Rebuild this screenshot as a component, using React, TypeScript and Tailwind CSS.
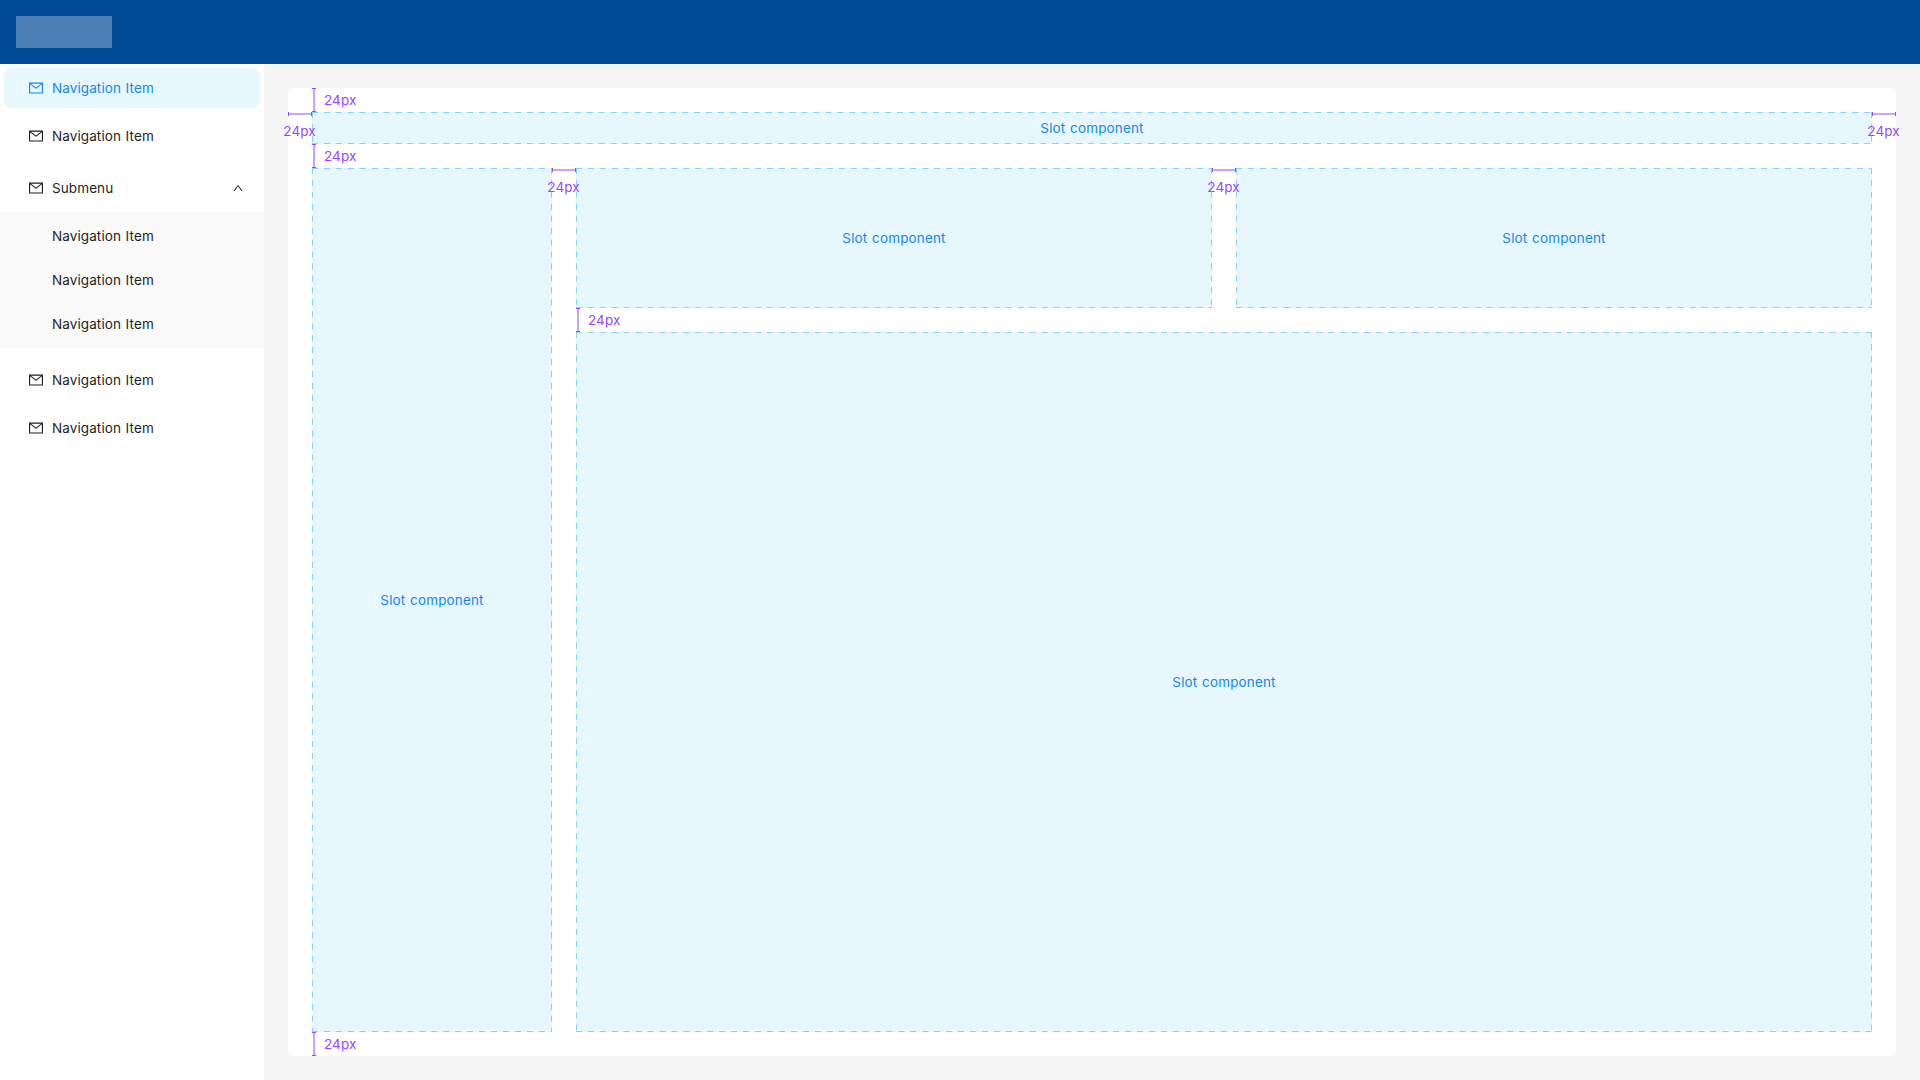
import type { ReactNode } from "react";
import { AiOutlineMail, AiOutlineUp } from "react-icons/ai";

function NavItem({ active = false, label = "Navigation Item" }: { active?: boolean; label?: string }) {
  return (
    <div className="h-12 p-1">
      <div
        className={
          active
            ? "flex h-10 items-center gap-2 rounded-lg bg-[#e6f7ff] pl-6 text-[#1688e8]"
            : "flex h-10 items-center gap-2 rounded-lg pl-6"
        }
      >
        <AiOutlineMail className="size-4" />
        <span>{label}</span>
      </div>
    </div>
  );
}

/* Dashed outline: every edge starts its dash pattern at its top or left end */
function DashedOutline() {
  return (
    <svg className="absolute inset-0 size-full" stroke="#87d0ff" strokeWidth="2" strokeDasharray="5.97 5.97">
      <line x1="0" y1="0" x2="100%" y2="0" />
      <line x1="0" y1="100%" x2="100%" y2="100%" />
      <line x1="0" y1="0" x2="0" y2="100%" />
      <line x1="100%" y1="0" x2="100%" y2="100%" />
    </svg>
  );
}

function Slot({ className, children }: { className: string; children?: ReactNode }) {
  return (
    <div className={"relative flex items-center justify-center bg-[#e6f7ff] text-[#1688e8] " + className}>
      <DashedOutline />
      <span className="relative tracking-[0.15px]">Slot component</span>
      {children}
    </div>
  );
}

/* 24px tall spacing marker with its label on the right */
function VerticalMark({ className }: { className: string }) {
  return (
    <div className={"absolute flex h-6 items-center text-[#9747ff] " + className}>
      <div className="flex h-6 w-1 justify-center border-y border-[#9747ff]">
        <div className="w-0.5 bg-[#cba3ff]" />
      </div>
      <span className="ml-2 tracking-[0.1px]">24px</span>
    </div>
  );
}

/* 24px wide spacing marker with its label underneath */
function HorizontalMark({ className }: { className: string }) {
  return (
    <div className={"absolute z-10 flex w-6 flex-col items-center text-[#9747ff] " + className}>
      <div className="flex h-1 w-6 items-center border-x border-[#9747ff]">
        <div className="h-0.5 w-full bg-[#cba3ff]" />
      </div>
      <span className="mt-1 mr-px leading-[23px] tracking-[0.1px]">24px</span>
    </div>
  );
}

export default function App() {
  return (
    <div className="flex h-[1080px] w-[1920px] flex-col overflow-hidden bg-[#f5f5f5] font-['Inter','Liberation_Sans',sans-serif] text-[13.5px] leading-5 font-normal tracking-[0.1px] text-[#1f1f1f] [word-spacing:0.7px]">
      <header className="flex h-16 shrink-0 items-center bg-[#004a98] px-4">
        <div className="h-8 w-24 bg-white/30" />
      </header>
      <div className="flex min-h-0 flex-1">
        <nav className="w-[264px] shrink-0 bg-white">
          <NavItem active />
          <NavItem />
          <div className="mt-1 flex h-12 items-center gap-2 pr-5 pl-7">
            <AiOutlineMail className="size-4" />
            <span className="flex-1">Submenu</span>
            <AiOutlineUp className="size-3" />
          </div>
          <div className="bg-[#fafafa] py-0.5 pl-[52px]">
            <div className="flex h-11 items-center">Navigation Item</div>
            <div className="flex h-11 items-center">Navigation Item</div>
            <div className="flex h-11 items-center">Navigation Item</div>
          </div>
          <div className="mt-2">
            <NavItem />
            <NavItem />
          </div>
        </nav>
        <main className="flex flex-1 p-6">
          <div className="relative flex flex-1 flex-col gap-6 rounded-lg bg-white p-6">
            <Slot className="h-8">
              <HorizontalMark className="top-0 -left-6" />
              <HorizontalMark className="top-0 -right-6" />
            </Slot>
            <div className="flex flex-1 gap-6">
              <Slot className="w-60">
                <HorizontalMark className="top-0 -right-6" />
              </Slot>
              <div className="flex flex-1 flex-col gap-6">
                <div className="flex h-[140px] gap-6">
                  <Slot className="flex-1">
                    <HorizontalMark className="top-0 -right-6" />
                    <VerticalMark className="-bottom-6 left-0" />
                  </Slot>
                  <Slot className="flex-1" />
                </div>
                <Slot className="flex-1" />
              </div>
            </div>
            <VerticalMark className="top-0 left-6" />
            <VerticalMark className="top-14 left-6" />
            <VerticalMark className="bottom-0 left-6" />
          </div>
        </main>
      </div>
    </div>
  );
}
